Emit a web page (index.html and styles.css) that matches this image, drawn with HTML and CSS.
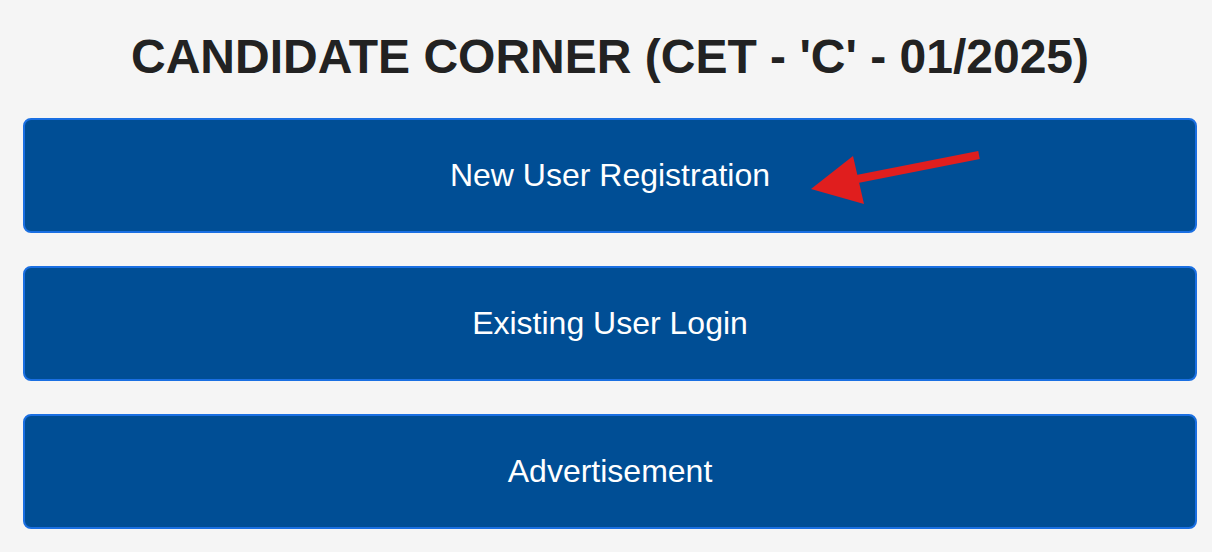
FILE: index.html
```html
<!DOCTYPE html>
<html>
<head>
<meta charset="utf-8">
<link rel="stylesheet" href="styles.css">
</head>
<body>
<div class="page">
  <h1 class="title">CANDIDATE CORNER (CET - 'C' - 01/2025)</h1>
  <div class="menu">
    <a class="btn" href="#">New User Registration
      <svg class="arrow" width="190" height="70" viewBox="800 140 190 70">
        <line x1="977" y1="153" x2="840" y2="180" stroke="#e01e1e" stroke-width="8" stroke-linecap="butt"/>
        <polygon points="809,187 851,154 862,202" fill="#e01e1e"/>
      </svg>
    </a>
    <a class="btn" href="#">Existing User Login</a>
    <a class="btn" href="#">Advertisement</a>
  </div>
</div>
</body>
</html>
```
FILE: styles.css
```css
html, body {
  margin: 0;
  padding: 0;
  background: #f5f5f5;
}
.page {
  padding: 27px 15px 0 23px;
  font-family: "Liberation Sans", Arial, sans-serif;
}
.title {
  margin: 0;
  font-size: 48px;
  line-height: 60px;
  font-weight: bold;
  color: #222222;
  text-align: center;
}
.menu {
  margin-top: 31px;
  display: flex;
  flex-direction: column;
  gap: 33px;
}
.btn {
  position: relative;
  display: flex;
  align-items: center;
  justify-content: center;
  height: 115px;
  box-sizing: border-box;
  background: #004e95;
  border: 2px solid #1a6fe2;
  border-radius: 8px;
  color: #ffffff;
  font-size: 32px;
  text-decoration: none;
}
.arrow {
  position: absolute;
  left: 777px;
  top: 22px;
}
```
